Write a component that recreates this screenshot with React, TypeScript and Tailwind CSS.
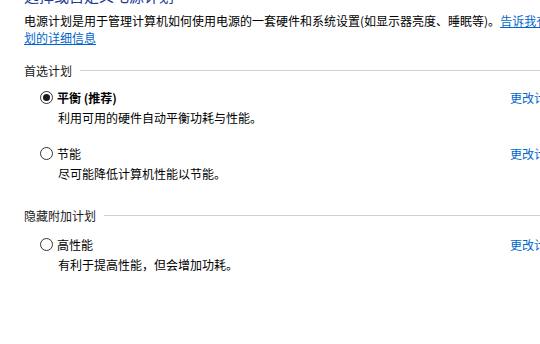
import React from "react"

const font = { fontFamily: '"Noto Sans CJK SC", "Noto Sans", sans-serif' }

function SectionHeader({ title }: { title: string }) {
  return (
    <div className="flex items-center gap-2 text-[12px] leading-[17px] text-[#1a1a1a]">
      <span>{title}</span>
      <div className="h-px flex-1 bg-[#d0d0d0]" />
    </div>
  )
}

function Radio({ checked }: { checked?: boolean }) {
  return (
    <span className="flex h-[13px] w-[13px] shrink-0 items-center justify-center rounded-full border border-[#333333] bg-white">
      {checked && <span className="h-[7px] w-[7px] rounded-full bg-[#1a1a1a]" />}
    </span>
  )
}

function Plan({
  name,
  desc,
  checked,
  bold,
}: {
  name: string
  desc: string
  checked?: boolean
  bold?: boolean
}) {
  return (
    <div className="pl-4">
      <div className="flex items-center">
        <div className="flex w-[470px] shrink-0 items-center gap-[4px]">
          <Radio checked={checked} />
          <span className={`text-[12px] leading-[17px] text-black ${bold ? "font-bold" : ""}`}>{name}</span>
        </div>
        <a className="shrink-0 whitespace-nowrap text-[12px] leading-[17px] text-[#0066cc]">更改计划设置</a>
      </div>
      <div className="mt-[3px] pl-[18px] text-[12px] leading-[17px] text-black">{desc}</div>
    </div>
  )
}

export default function App() {
  return (
    <div className="h-[344px] w-[540px] overflow-hidden bg-white" style={font}>
      <div className="-mt-[14px] w-[640px] pl-6">
        <h1 className="text-[15px] leading-[20px] text-[#1e3c96]">选择或自定义电源计划</h1>
        <p className="mt-[6px] whitespace-nowrap text-[12px] leading-[17px] text-black">
          电源计划是用于管理计算机如何使用电源的一套硬件和系统设置(如显示器亮度、睡眠等)。
          <a className="text-[#0066cc] underline">
            告诉我有关电源计
            <br />
            划的详细信息
          </a>
        </p>

        <div className="mt-[16px] w-[516px]">
          <SectionHeader title="首选计划" />
          <div className="mt-[10px] flex flex-col gap-[19px]">
            <Plan name="平衡 (推荐)" desc="利用可用的硬件自动平衡功耗与性能。" checked bold />
            <Plan name="节能" desc="尽可能降低计算机性能以节能。" />
          </div>

          <div className="mt-[25px]">
            <SectionHeader title="隐藏附加计划" />
          </div>
          <div className="mt-[12px]">
            <Plan name="高性能" desc="有利于提高性能，但会增加功耗。" />
          </div>
        </div>
      </div>
    </div>
  )
}
